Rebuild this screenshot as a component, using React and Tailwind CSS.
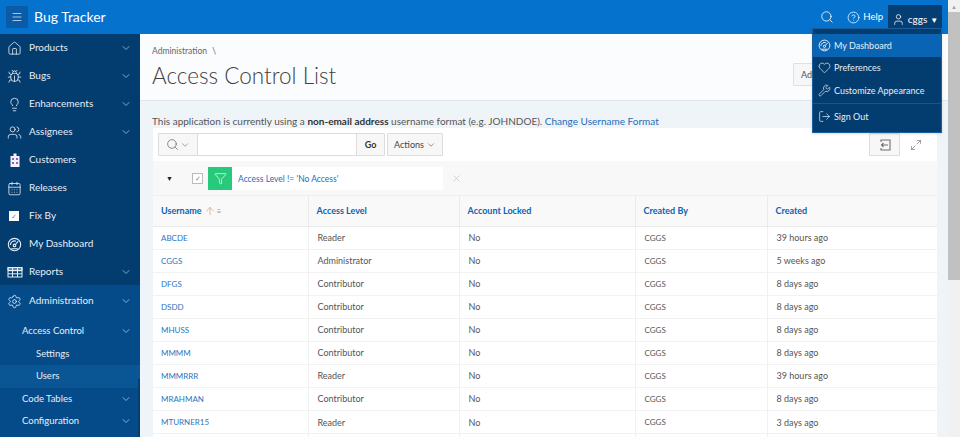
import {
  ArrowUp,
  Bug,
  CalendarDays,
  ChevronDown,
  CircleHelp,
  Filter,
  Heart,
  Home,
  Lightbulb,
  LogOut,
  Maximize2,
  Menu,
  Search,
  Settings,
  User,
  Users,
  Wrench,
  X,
} from "lucide-react";

const font = { fontFamily: 'Lato, "Open Sans", sans-serif' };

function GaugeIcon({ size = 16 }) {
  return (
    <svg width={size} height={size} viewBox="0 0 16 16" fill="none" stroke="currentColor" strokeWidth="1.2">
      <circle cx="8" cy="8" r="6.6" />
      <circle cx="8" cy="9" r="1.4" />
      <path d="M9 8l3-3.5M3.6 8.5a4.4 4.4 0 0 1 6-4M4.5 12.5h7" />
    </svg>
  );
}

function BuildingIcon() {
  return (
    <svg width="16" height="16" viewBox="0 0 16 16">
      <path d="M6.5 1.5h3V4H12.5V15H3.5V4h3z" fill="#f4f1fa" />
      <path d="M5 6h2v2H5zM9 6h2v2H9zM5 10h2v2H5zM9 10h2v2H9z" fill="#8a63c4" />
    </svg>
  );
}

function TableIcon() {
  return (
    <svg width="16" height="16" viewBox="0 0 16 16" fill="none" stroke="currentColor" strokeWidth="1">
      <rect x="1" y="3.5" width="14" height="9.5" />
      <path d="M1 6.6h14M1 9.8h14M5.5 3.5V13M10.5 3.5V13" />
      <path d="M1 3.5h14v3.1H1z" fill="currentColor" fillOpacity="0.45" />
    </svg>
  );
}

function ReportResetIcon() {
  return (
    <svg width="14" height="14" viewBox="0 0 14 14" fill="none" stroke="#6f6f6f" strokeWidth="1.1">
      <path d="M3 4V2h9v10H3v-2" />
      <path d="M10 7H3.5M5.5 5L3.5 7l2 2" />
    </svg>
  );
}

const topNav = [
  { label: "Products", icon: <Home size={15} strokeWidth={1.3} />, more: true },
  { label: "Bugs", icon: <Bug size={15} strokeWidth={1.3} />, more: true },
  { label: "Enhancements", icon: <Lightbulb size={15} strokeWidth={1.3} />, more: true },
  { label: "Assignees", icon: <Users size={15} strokeWidth={1.3} />, more: true },
  { label: "Customers", icon: <BuildingIcon /> },
  { label: "Releases", icon: <CalendarDays size={15} strokeWidth={1.3} /> },
  {
    label: "Fix By",
    icon: (
      <span className="ml-[2px] flex h-[10px] w-[10px] items-center justify-center bg-white text-[7px] leading-none text-[#7d7fc0]">✓</span>
    ),
  },
  { label: "My Dashboard", icon: <GaugeIcon size={15} /> },
  { label: "Reports", icon: <TableIcon />, more: true },
];

const rows = [
  ["ABCDE", "Reader", "No", "CGGS", "39 hours ago"],
  ["CGGS", "Administrator", "No", "CGGS", "5 weeks ago"],
  ["DFGS", "Contributor", "No", "CGGS", "8 days ago"],
  ["DSDD", "Contributor", "No", "CGGS", "8 days ago"],
  ["MHUSS", "Contributor", "No", "CGGS", "8 days ago"],
  ["MMMM", "Contributor", "No", "CGGS", "8 days ago"],
  ["MMMRRR", "Reader", "No", "CGGS", "39 hours ago"],
  ["MRAHMAN", "Contributor", "No", "CGGS", "8 days ago"],
  ["MTURNER15", "Reader", "No", "CGGS", "3 days ago"],
  // next row sits below the fold, only its top edge shows
  ["", "", "", "", ""],
];

function NavItem({ label, icon, more }) {
  return (
    <div className="flex h-[28px] items-center pl-[7px] pr-[8px] text-[10px] text-[#e6eef6]">
      <span className="flex w-[22px] shrink-0 items-center">{icon}</span>
      <span className="flex-1 pb-[1px]">{label}</span>
      {more && <ChevronDown size={12} strokeWidth={1.5} className="opacity-80" />}
    </div>
  );
}

function SubItem({ label, indent, more, active }) {
  return (
    <div
      className={`flex h-[22.5px] items-center pr-[8px] text-[9.5px] text-[#e6eef6] ${indent ? "pl-[36px]" : "pl-[22px]"} ${active ? "bg-[#0a5694]" : ""}`}
    >
      <span className="flex-1">{label}</span>
      {more && <ChevronDown size={12} strokeWidth={1.5} className="opacity-80" />}
    </div>
  );
}

function Sidebar() {
  return (
    <aside className="relative h-[403px] w-[140px] shrink-0 overflow-hidden bg-[#033c6f]">
      {topNav.map((item) => (
        <NavItem key={item.label} {...item} />
      ))}
      <div className="-mt-[1px] bg-[#054b89] pb-[4px]">
        <div className="h-[2px]" />
        <NavItem label="Administration" icon={<Settings size={15} strokeWidth={1.3} />} more />
        <div className="h-[5px]" />
        <SubItem label="Access Control" more />
        <SubItem label="Settings" indent />
        <SubItem label="Users" indent active />
        <SubItem label="Code Tables" more />
        <SubItem label="Configuration" more />
      </div>
      <div className="absolute bottom-0 right-0 h-[58px] w-[2px] bg-[#043e73]" />
    </aside>
  );
}

function Header() {
  return (
    <header className="flex h-[34px] shrink-0 items-center bg-[#0572ce] px-[6px] text-white">
      <span className="flex h-[22px] w-[22px] items-center justify-center rounded-[1px] bg-[#0a5ca8]">
        <Menu size={12} strokeWidth={1.3} />
      </span>
      <span className="ml-[6px] text-[14px] leading-none">Bug Tracker</span>
      <div className="ml-auto flex h-full items-center">
        <Search size={14} strokeWidth={1.4} />
        <CircleHelp size={13} strokeWidth={1.4} className="ml-[13px]" />
        <span className="ml-[3px] mr-[5px] text-[9.5px]">Help</span>
        <div className="flex h-[29px] w-[54px] items-center justify-center gap-[3px] self-end bg-[#043e73] text-[10px]">
          <User size={13} strokeWidth={1.4} />
          <span>cggs</span>
          <span className="text-[8px]">▼</span>
        </div>
      </div>
    </header>
  );
}

function MenuRow({ label, icon, active }) {
  return (
    <div className={`flex h-[22.5px] items-center pl-[5px] ${active ? "bg-[#0a64b4]" : ""}`}>
      <span className="mr-[3px] flex w-[13px] justify-center">{icon}</span>
      {label}
    </div>
  );
}

function UserMenu() {
  return (
    <div className="absolute left-[812px] top-[28px] z-10 w-[130px] border border-[#1a5f9c] bg-[#033c6f] pb-[2px] pt-[5px] text-[9px] text-[#e6eef6] shadow">
      <MenuRow label="My Dashboard" icon={<GaugeIcon size={13} />} active />
      <MenuRow label="Preferences" icon={<Heart size={13} strokeWidth={1.3} />} />
      <MenuRow label="Customize Appearance" icon={<Wrench size={13} strokeWidth={1.3} />} />
      <div className="mt-[1px] border-t border-[#1c5485]">
        <div className="flex h-[26px] items-center pl-[5px]">
          <span className="mr-[3px] flex w-[13px] justify-center">
            <LogOut size={13} strokeWidth={1.3} />
          </span>
          Sign Out
        </div>
      </div>
    </div>
  );
}

function ReportToolbar() {
  return (
    <div className="flex h-[33px] items-start pl-[5px] pr-[15px] pt-[5px]">
      <div className="flex h-[23px] w-[227px] rounded-[1px] border border-[#dcdcdc] bg-white">
        <span className="flex w-[39px] items-center justify-center gap-[1px] border-r border-[#dcdcdc] bg-[#f7f7f7] text-[#555]">
          <Search size={13} strokeWidth={1.2} />
          <ChevronDown size={10} strokeWidth={1.3} />
        </span>
        <span className="flex-1" />
        <span className="flex w-[28px] items-center justify-center border-l border-[#dcdcdc] bg-[#f7f7f7] text-[9px] font-bold text-[#333]">Go</span>
      </div>
      <span className="ml-[2px] flex h-[23px] w-[56px] items-center justify-center gap-[2px] rounded-[1px] border border-[#dcdcdc] bg-[#f7f7f7] text-[9px] text-[#444]">
        Actions
        <ChevronDown size={10} strokeWidth={1.3} />
      </span>
      <span className="ml-auto flex h-[23px] w-[31px] items-center justify-center rounded-[1px] border border-[#dcdcdc] bg-[#f7f7f7]">
        <ReportResetIcon />
      </span>
      <span className="ml-[10px] flex h-[23px] w-[12px] items-center justify-center text-[#666]">
        <Maximize2 size={12} strokeWidth={1.2} />
      </span>
    </div>
  );
}

function FilterRow() {
  return (
    <div className="flex h-[35px] items-center border-b border-[#efefef] bg-[#f8f8f8] pl-[13px]">
      <span className="w-[26px] text-[7px] text-[#222]">▼</span>
      <span className="flex h-[11px] w-[11px] items-center justify-center border border-[#bbb] bg-white text-[7px] text-[#888]">✓</span>
      <div className="ml-[5px] flex h-[23px] w-[235px] items-center bg-white">
        <span className="flex h-full w-[24px] items-center justify-center bg-[#27c97a] text-white">
          <Filter size={13} strokeWidth={1.3} />
        </span>
        <span className="ml-[6px] pt-[2px] text-[8.5px] text-[#1f6cb8]">Access Level != 'No Access'</span>
      </div>
      <X size={11} strokeWidth={1.3} className="ml-[8px] text-[#bbb]" />
    </div>
  );
}

function ReportTable() {
  const cell = "border-l border-[#f0f0f0] pl-[9px] pr-[8px] text-[9px] font-normal";
  const head = "border-l border-[#ebebeb] px-[8px] text-[9px] font-bold";
  return (
    <table className="w-full table-fixed border-collapse text-left">
      <colgroup>
        <col className="w-[155px]" />
        <col className="w-[151px]" />
        <col className="w-[176px]" />
        <col className="w-[132px]" />
        <col />
      </colgroup>
      <thead>
        <tr className="h-[30px] border-b border-[#ebebeb] bg-[#f9f9f9] text-[#0a63b3]">
          <th className="px-[8px] text-[9px] font-bold">
            <span className="inline-flex items-center gap-[1px]">
              Username
              <ArrowUp size={12} strokeWidth={1.5} className="ml-[1px] text-[#c9a78f]" />
              <span className="text-[8px] font-normal text-[#999]">≡</span>
            </span>
          </th>
          <th className={head}>Access Level</th>
          <th className={head}>Account Locked</th>
          <th className={head}>Created By</th>
          <th className={head}>Created</th>
        </tr>
      </thead>
      <tbody>
        {rows.map(([name, level, locked, by, created], i) => (
          <tr key={i} className="h-[23.1px] border-b border-[#f2f2f2] text-[#555]">
            <td className="px-[8px] text-[8px] text-[#2a75c0]">{name}</td>
            <td className={cell}>{level}</td>
            <td className={cell}>{locked}</td>
            <td className="border-l border-[#f0f0f0] pl-[9px] pr-[8px] text-[8px] font-normal">{by}</td>
            <td className={cell}>{created}</td>
          </tr>
        ))}
      </tbody>
    </table>
  );
}

function Content() {
  return (
    <main className="min-w-0 flex-1 overflow-hidden bg-[#eff4f9]">
      <div className="flex h-[67px] border-b border-[#dfe5eb] bg-[#fbfcfe] pl-[12px]">
        <div>
          <p className="mt-[12px] text-[8.5px] leading-[10px] text-[#666]">
            Administration <span className="ml-[3px]">\</span>
          </p>
          <h1 className="mt-[5px] text-[22.5px] font-light leading-[30px] text-[#404040]">Access Control List</h1>
        </div>
        <span className="ml-auto mr-[90px] mt-[29px] flex h-[23px] w-[65px] items-center rounded-[1px] border border-[#e0e0e0] bg-[#f7f7f7] pl-[7px] text-[9px] text-[#555]">
          Add User
        </span>
      </div>
      <p className="mt-[13px] pl-[12px] text-[10px] leading-[14px] text-[#555]">
        This application is currently using a <b className="font-bold text-[#333]">non-email address</b> username format (e.g. JOHNDOE). <span className="text-[#1f6cb8]">Change Username Format</span>
      </p>
      <div className="ml-[13px] mr-[11px] bg-white">
        <ReportToolbar />
        <FilterRow />
        <ReportTable />
      </div>
    </main>
  );
}

function PageScrollbar() {
  return (
    <div className="flex h-full w-[12px] shrink-0 flex-col bg-[#f1f1f1]">
      <div className="flex h-[12px] items-center justify-center text-[6px] text-[#a3a3a3]">▲</div>
      <div className="h-[268px] bg-[#c1c1c1]" />
    </div>
  );
}

export default function App() {
  return (
    <div className="relative flex h-[437px] w-[960px] overflow-hidden bg-white" style={font}>
      <div className="flex min-w-0 flex-1 flex-col">
        <Header />
        <div className="flex min-h-0 flex-1">
          <Sidebar />
          <Content />
        </div>
      </div>
      <PageScrollbar />
      <UserMenu />
    </div>
  );
}
